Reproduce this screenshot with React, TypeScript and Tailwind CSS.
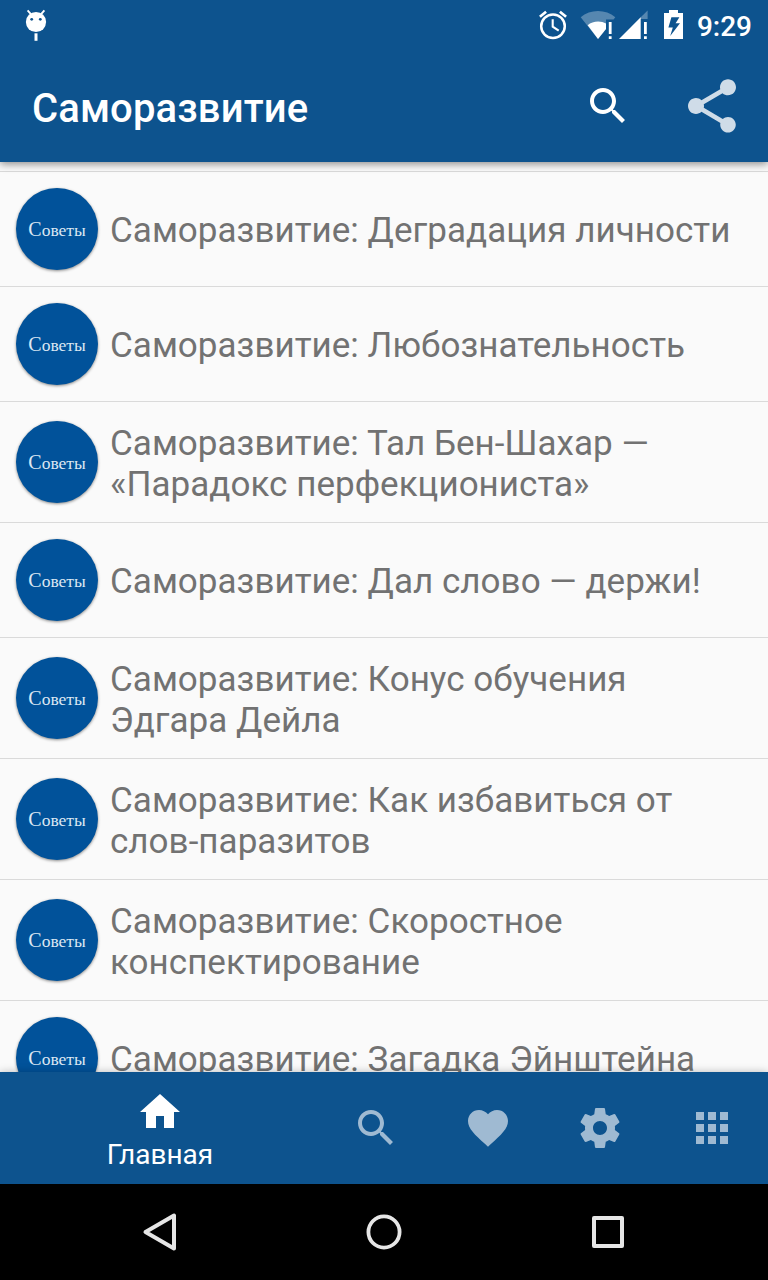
import type { ReactNode } from 'react';

interface NavItem {
  id: string;
  path: string;
}

const SEARCH_PATH =
  'M15.5 14h-.79l-.28-.27C15.41 12.59 16 11.11 16 9.5 16 5.91 13.09 3 9.5 3S3 5.91 3 9.5 5.91 16 9.5 16c1.61 0 3.09-.59 4.23-1.57l.27.28v.79l5 4.99L20.49 19l-4.99-5zm-6 0C7.01 14 5 11.99 5 9.5S7.01 5 9.5 5 14 7.01 14 9.5 11.99 14 9.5 14z';
const SHARE_PATH =
  'M18 16.08c-.76 0-1.44.3-1.96.77L8.91 12.7c.05-.23.09-.46.09-.7s-.04-.47-.09-.7l7.05-4.11c.54.5 1.25.81 2.04.81 1.66 0 3-1.34 3-3s-1.34-3-3-3-3 1.34-3 3c0 .24.04.47.09.7L8.04 9.81C7.5 9.31 6.79 9 6 9c-1.66 0-3 1.34-3 3s1.34 3 3 3c.79 0 1.5-.31 2.04-.81l7.12 4.16c-.05.21-.08.43-.08.65 0 1.61 1.31 2.92 2.92 2.92 1.61 0 2.92-1.31 2.92-2.92s-1.31-2.92-2.92-2.92z';
const HOME_PATH = 'M10 20v-6h4v6h5v-8h3L12 3 2 12h3v8z';

const navItems: NavItem[] = [
  { id: 'search', path: SEARCH_PATH },
  {
    id: 'favorites',
    path: 'M12 21.35l-1.45-1.32C5.4 15.36 2 12.28 2 8.5 2 5.42 4.42 3 7.5 3c1.74 0 3.41.81 4.5 2.09C13.09 3.81 14.76 3 16.5 3 19.58 3 22 5.42 22 8.5c0 3.78-3.4 6.86-8.55 11.54L12 21.35z',
  },
  {
    id: 'settings',
    path: 'M19.43 12.98c.04-.32.07-.64.07-.98s-.03-.66-.07-.98l2.11-1.65c.19-.15.24-.42.12-.64l-2-3.46c-.12-.22-.39-.3-.61-.22l-2.49 1c-.52-.4-1.08-.73-1.69-.98l-.38-2.65C14.46 2.18 14.25 2 14 2h-4c-.25 0-.46.18-.49.42l-.38 2.65c-.61.25-1.17.59-1.69.98l-2.49-1c-.23-.09-.49 0-.61.22l-2 3.46c-.13.22-.07.49.12.64l2.11 1.65c-.04.32-.07.65-.07.98s.03.66.07.98l-2.11 1.65c-.19.15-.24.42-.12.64l2 3.46c.12.22.39.3.61.22l2.49-1c.52.4 1.08.73 1.69.98l.38 2.65c.03.24.24.42.49.42h4c.25 0 .46-.18.49-.42l.38-2.65c.61-.25 1.17-.59 1.69-.98l2.49 1c.23.09.49 0 .61-.22l2-3.46c.12-.22.07-.49-.12-.64l-2.11-1.65zM12 15.5c-1.93 0-3.5-1.57-3.5-3.5s1.57-3.5 3.5-3.5 3.5 1.57 3.5 3.5-1.57 3.5-3.5 3.5z',
  },
  {
    id: 'apps',
    path: 'M4 8h4V4H4v4zm6 12h4v-4h-4v4zm-6 0h4v-4H4v4zm0-6h4v-4H4v4zm6 0h4v-4h-4v4zm6-10v4h4V4h-4zm-6 4h4V4h-4v4zm6 6h4v-4h-4v4zm0 6h4v-4h-4v4z',
  },
];

const articles: string[][] = [
  ['Саморазвитие: Деградация личности'],
  ['Саморазвитие: Любознательность'],
  ['Саморазвитие: Тал Бен-Шахар —', '«Парадокс перфекциониста»'],
  ['Саморазвитие: Дал слово — держи!'],
  ['Саморазвитие: Конус обучения', 'Эдгара Дейла'],
  ['Саморазвитие: Как избавиться от', 'слов-паразитов'],
  ['Саморазвитие: Скоростное', 'конспектирование'],
  ['Саморазвитие: Загадка Эйнштейна'],
];

function Icon({ path, className }: { path: string; className: string }) {
  return (
    <svg viewBox="0 0 24 24" fill="currentColor" className={className}>
      <path d={path} />
    </svg>
  );
}

function StatusBar() {
  return (
    <div className="flex h-[50px] items-start justify-between pl-6 pr-4">
      <svg width="24" height="50" viewBox="0 0 24 50" fill="white">
        <path d="M3.6 10.4l3.5 4M20.4 10.4l-3.5 4" stroke="white" strokeWidth="1.9" />
        <circle cx="12" cy="22" r="10.1" />
        <circle cx="7.7" cy="19.3" r="1.4" fill="#0d538e" />
        <circle cx="16.3" cy="19.3" r="1.4" fill="#0d538e" />
        <path d="M10.5 33.3h3v7.5h-3z" />
      </svg>
      <div className="flex items-start">
        <svg width="158" height="50" viewBox="536 0 158 50" fill="white">
          <g fill="none" stroke="white">
            <circle cx="553" cy="26.2" r="11.8" strokeWidth="2.5" />
            <path d="M552.7 19.3v7.4l6 4" strokeWidth="2.1" />
            <path d="M539.9 16.8l6.2-5.1M566.1 16.8l-6.2-5.1" strokeWidth="2.7" />
          </g>
          <path d="M598 39L580.7 17.2C590 9 606 9 615.3 17.2L613.5 19.5H606V29z" opacity=".3" />
          <path d="M598 39L587.7 25.3C592.5 20.8 601 20.5 606 23.6V29z" />
          <path d="M608.8 22h2.8v12h-2.8zM608.8 36.2h2.8v2.9h-2.8z" />
          <path d="M640 18l7.6-7.5V19H640z" opacity=".3" />
          <path d="M619 39L640.7 17.3V39z" />
          <path d="M644 22h2.8v12h-2.8zM644 36.2h2.8v2.9h-2.8z" />
          <path
            fillRule="evenodd"
            d="M669 10h9v3h5v26h-19V13h5zM671.4 17.3l-3 10.2h4.4L670.2 36L680 23.2H675.6L679.4 17.3z"
          />
        </svg>
        <span className="ml-[3px] mt-[10px] text-[28px] leading-[34px] font-medium">9:29</span>
      </div>
    </div>
  );
}

function Header() {
  return (
    <header className="relative z-10 h-[162px] shrink-0 bg-[#0d538e] text-white shadow-[0_2px_8px_rgba(0,0,0,0.45)]">
      <StatusBar />
      <div className="flex h-28 items-center pl-8 pr-6">
        <h1 className="flex-1 pt-1.5 text-[40px] leading-[48px] font-medium tracking-[0.13px]">Саморазвитие</h1>
        <button className="mr-12">
          <Icon path={SEARCH_PATH} className="size-12" />
        </button>
        <button className="text-[#cfdce8]">
          <Icon path={SHARE_PATH} className="size-16" />
        </button>
      </div>
    </header>
  );
}

function ArticleRow({ children, tall }: { children: ReactNode; tall: boolean }) {
  return (
    <li
      className={`flex shrink-0 items-center border-t border-[#dadada] pl-4 ${
        tall ? 'h-[121px]' : 'h-[115px]'
      }`}
    >
      <div className="flex size-[82px] shrink-0 items-center justify-center rounded-full bg-[#01529a] shadow-[0_1px_3px_rgba(0,0,0,0.45)]">
        <span className="pt-px font-['Liberation_Serif',serif] text-[17.5px] leading-6 text-[#dce8f3]">
          <span className="text-[20px]">С</span>оветы
        </span>
      </div>
      <div
        className={`ml-3 whitespace-nowrap text-[35px] leading-[41px] tracking-[0.03px] text-[#727272] ${
          tall ? 'pt-1' : 'pt-0.5'
        }`}
      >
        {children}
      </div>
    </li>
  );
}

function BottomNav() {
  return (
    <nav className="relative z-10 flex h-28 shrink-0 bg-[#0d538e] text-[#9fbad2] shadow-[0_0_8px_rgba(0,0,0,0.25)]">
      <button className="flex w-80 flex-col items-center pt-4 text-white">
        <Icon path={HOME_PATH} className="size-12" />
        <span className="pt-px text-[28px] leading-9">Главная</span>
      </button>
      {navItems.map((item) => (
        <button key={item.id} className="flex w-28 items-center justify-center">
          <Icon path={item.path} className="size-12" />
        </button>
      ))}
    </nav>
  );
}

function SystemBar() {
  return (
    <div className="flex h-24 shrink-0 items-center justify-between bg-black px-[136px]">
      <svg width="48" height="48" viewBox="0 0 48 48" fill="none" stroke="#e6e6e6" strokeWidth="4" strokeLinejoin="round">
        <path d="M9.5 24L38 7.6v32.8z" />
      </svg>
      <svg width="48" height="48" viewBox="0 0 48 48" fill="none" stroke="#e6e6e6" strokeWidth="3.8">
        <circle cx="24" cy="24" r="15.6" />
      </svg>
      <svg width="48" height="48" viewBox="0 0 48 48" fill="none" stroke="#e6e6e6" strokeWidth="4" strokeLinejoin="round">
        <path d="M10 10h28v28H10z" />
      </svg>
    </div>
  );
}

export default function App() {
  return (
    <div className="flex h-[1280px] w-[768px] flex-col overflow-hidden bg-[#fafafa] font-[Roboto,sans-serif]">
      <Header />
      <main className="min-h-0 flex-1 overflow-hidden pt-[9px]">
        <ul className="flex flex-col">
          {articles.map((lines) => (
            <ArticleRow key={lines[0]} tall={lines.length > 1}>
              {lines.map((line) => (
                <p key={line}>{line}</p>
              ))}
            </ArticleRow>
          ))}
        </ul>
      </main>
      <BottomNav />
      <SystemBar />
    </div>
  );
}
